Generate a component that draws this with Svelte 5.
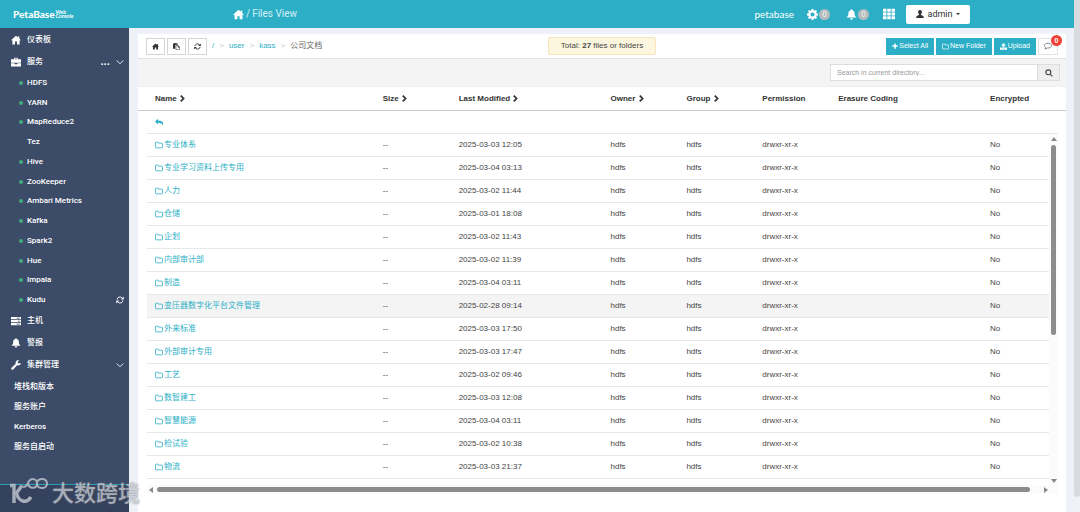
<script lang="ts">
  type Row = { name: string; modified: string };

  const services = [
    "HDFS",
    "YARN",
    "MapReduce2",
    "Tez",
    "Hive",
    "ZooKeeper",
    "Ambari Metrics",
    "Kafka",
    "Spark2",
    "Hue",
    "Impala",
    "Kudu",
  ];
  const admin = ["堆栈和版本", "服务账户", "Kerberos", "服务自启动"];

  const columns = [
    { label: "Name", width: 3, sortable: true },
    { label: "Size", width: 1, sortable: true },
    { label: "Last Modified", width: 2, sortable: true },
    { label: "Owner", width: 1, sortable: true },
    { label: "Group", width: 1, sortable: true },
    { label: "Permission", width: 1, sortable: false },
    { label: "Erasure Coding", width: 2, sortable: false },
    { label: "Encrypted", width: 1, sortable: false },
  ];

  const rows: Row[] = [
    { name: "专业体系", modified: "2025-03-03 12:05" },
    { name: "专业学习资料上传专用", modified: "2025-03-04 03:13" },
    { name: "人力", modified: "2025-03-02 11:44" },
    { name: "仓储", modified: "2025-03-01 18:08" },
    { name: "企划", modified: "2025-03-02 11:43" },
    { name: "内部审计部", modified: "2025-03-02 11:39" },
    { name: "制造", modified: "2025-03-04 03:11" },
    { name: "变压器数字化平台文件管理", modified: "2025-02-28 09:14" },
    { name: "外来标准", modified: "2025-03-03 17:50" },
    { name: "外部审计专用", modified: "2025-03-03 17:47" },
    { name: "工艺", modified: "2025-03-02 09:46" },
    { name: "数智建工", modified: "2025-03-03 12:08" },
    { name: "智慧能源", modified: "2025-03-04 03:11" },
    { name: "检试验", modified: "2025-03-02 10:38" },
    { name: "物流", modified: "2025-03-03 21:37" },
  ];

  let selected = $state(7);
  let query = $state("");
</script>

{#snippet icon(name: string, size: number)}
  <svg class="icon" width={size} height={size} viewBox="0 0 16 16" fill="currentColor" aria-hidden="true">
    {#if name === "home"}
      <path d="M8 1 0 8.4h2.2V15h4.2v-4.6h3.2V15h4.2V8.4H16l-2.6-2.5V2h-2v2.1z" />
    {:else if name === "case"}
      <path d="M5 3.5V1.8C5 1.2 5.4 1 6 1h4c.6 0 1 .3 1 .8v1.700h5v5.500H0v-5.500zm1.500 0h3v-1h-3zM0 10h6v1.500h4V10h6v5H0z" />
    {:else if name === "server"}
      <path d="M0 1.500h16v3.600H0zM0 6.300h16v3.600H0zM0 11.100h16v3.600H0z" />
      <path d="M9 2.800h5v1H9zM11 7.600h3v1h-3zM9 12.400h5v1H9z" fill="#3c4b67" />
    {:else if name === "bell"}
      <path d="M8 .5c.7 0 1.200.5 1.200 1.200C11.500 2.300 12.500 4 12.500 6.500c0 3 1 4.500 3 6H.5c2-1.500 3-3 3-6 0-2.500 1-4.200 3.300-4.800C6.800 1 7.300.5 8 .5zM6 13.300h4c0 1.300-.9 2.200-2 2.200s-2-.9-2-2.200z" />
    {:else if name === "wrench"}
      <path d="M15.600 4.200 12.900 5.700 10.800 4.600V2.300L13.400.8C11.200-.2 8.200.7 7.500 3.400c-.3 1-.1 1.900.1 2.700L.8 12.400c-1.800 1.900 1 4.600 2.800 2.800L9.800 8.400c3.300 1 6.200-1 5.800-4.200z" />
    {:else if name === "gear"}
      <path fill-rule="evenodd" d="M6.700 0h2.600l.4 2.200 1.200.5L12.800 1.400l1.800 1.800-1.300 1.900.5 1.200 2.200.4v2.600l-2.200.4-.5 1.200 1.300 1.900-1.800 1.800-1.900-1.300-1.200.5-.4 2.200H6.700l-.4-2.200-1.200-.5-1.900 1.300-1.800-1.800 1.300-1.900-.5-1.200L0 9.300V6.700l2.200-.4.5-1.200-1.300-1.900 1.800-1.800 1.900 1.300 1.200-.5zM8 5a3 3 0 1 0 0 6 3 3 0 0 0 0-6z" />
    {:else if name === "grid"}
      <path d="M0 1h4.600v4H0zM5.700 1h4.600v4H5.700zM11.400 1H16v4h-4.600zM0 6h4.600v4H0zM5.700 6h4.600v4H5.700zM11.400 6H16v4h-4.600zM0 11h4.600v4H0zM5.700 11h4.600v4H5.700zM11.400 11H16v4h-4.600z" />
    {:else if name === "user"}
      <path d="M8 0c2.400 0 3.800 1.600 3.800 4 0 1.800-.7 3.600-1.800 4.600v1.600c2 .9 5 1.500 5.500 3.800V16H.5v-2c.5-2.300 3.500-2.900 5.500-3.800V8.600C4.900 7.600 4.200 5.800 4.200 4 4.200 1.600 5.600 0 8 0z" />
    {:else if name === "paste"}
      <path d="M0 1h3V0h5v1h3v3H5v9H0z" />
      <path d="M6.700 5.700h5l3.600 3.600v6H6.700z" fill="#fff" stroke="currentColor" stroke-width="1.400" />
      <path d="M11 5v5h5z" />
    {:else if name === "refresh"}
      <path d="M13.500 6A6 6 0 0 0 3 4.500M2.500 10A6 6 0 0 0 13 11.500M2.200 7C2.400 5.500 3 4.500 4 3.600M13.800 9c-.2 1.500-.8 2.500-1.800 3.400" fill="none" stroke="currentColor" stroke-width="2" />
      <path d="M15.500 1v6h-6zM.5 15V9h6z" />
    {:else if name === "chevron"}
      <path d="M4 1.500 10.500 8 4 14.500" fill="none" stroke="currentColor" stroke-width="4" />
    {:else if name === "down"}
      <path d="M1.500 5 8 11.500 14.500 5" fill="none" stroke="currentColor" stroke-width="1.800" />
    {:else if name === "reply"}
      <path d="M6 1.500V5c6 0 10 1.500 10 6 0 1.500-.6 3-1.600 4C15 11 12 9.300 6 9.300V13L0 7.200z" />
    {:else if name === "folder"}
      <path d="M1 12.500v-9c0-.7.500-1.200 1.200-1.200h3.300c.7 0 1.200.5 1.200 1.200v.8h7c.7 0 1.300.6 1.300 1.300v6.900c0 .7-.6 1.200-1.300 1.200H2.200c-.7 0-1.200-.5-1.200-1.200z" fill="none" stroke="currentColor" stroke-width="1.600" />
    {:else if name === "plus"}
      <path d="M6 1h4v5h5v4h-5v5H6v-5H1V6h5z" />
    {:else if name === "upload"}
      <path d="M8 0l5.500 5.500H10V11H6V5.500H2.500zM0 10h5v2h6v-2h5v5.500H0z" />
    {:else if name === "comment"}
      <path d="M8 2.500c3.900 0 7 2 7 4.800S11.900 12 8 12c-.5 0-1 0-1.500-.1C5 13.300 3.500 14 2 14c.8-.9 1.200-1.800 1.300-3C1.800 10.100 1 8.800 1 7.300c0-2.800 3.100-4.800 7-4.800z" fill="none" stroke="currentColor" stroke-width="1.400" />
    {:else if name === "search"}
      <circle cx="6.700" cy="6.700" r="4.900" fill="none" stroke="currentColor" stroke-width="2.200" />
      <path d="M10 11.500l1.500-1.500 4 4-1.500 1.500z" />
    {/if}
  </svg>
{/snippet}

{#snippet cols()}
  <colgroup>
    {#each columns as c}
      <col style="width: {(c.width / 12) * 100}%" />
    {/each}
  </colgroup>
{/snippet}

<div class="page">
  <div class="app">
    <header class="topbar">
      <a class="brand" href="#home">
        <strong>PetaBase</strong>
        <span class="sub"><span>Web</span><span>Console</span></span>
      </a>
      <nav class="trail">
        <a href="#home" aria-label="Home">{@render icon("home", 11)}</a>
        <span>/</span>
        <span>Files View</span>
      </nav>
      <div class="tools">
        <span class="cluster">petabase</span>
        <button class="tool ops" aria-label="Operations">{@render icon("gear", 11)}<span class="count">0</span></button>
        <button class="tool alerts" aria-label="Alerts">{@render icon("bell", 11)}<span class="count">0</span></button>
        <button class="tool views" aria-label="Views">{@render icon("grid", 12)}</button>
        <button class="account">{@render icon("user", 8)}admin<span class="caret"></span></button>
      </div>
    </header>

    <div class="columns">
      <aside class="sidebar">
        <nav>
          <a class="item" href="#dashboard">{@render icon("home", 10)}<span>仪表板</span></a>
          <a class="item" href="#services">
            {@render icon("case", 10)}<span>服务</span>
            <span class="more">...</span>
            {@render icon("down", 8)}
          </a>
          <ul class="services">
            {#each services as name}
              <li>
                <i class="dot" class:off={name === "Tez"}></i>
                <a href="#{name}">{name}</a>
                {#if name === "Kudu"}<span class="restart">{@render icon("refresh", 8)}</span>{/if}
              </li>
            {/each}
          </ul>
          <a class="item" href="#hosts">{@render icon("server", 10)}<span>主机</span></a>
          <a class="item" href="#alerts">{@render icon("bell", 10)}<span>警报</span></a>
          <a class="item" href="#admin">
            {@render icon("wrench", 10)}<span class="grow">集群管理</span>
            {@render icon("down", 8)}
          </a>
          <ul class="admin">
            {#each admin as name}
              <li><a href="#{name}">{name}</a></li>
            {/each}
          </ul>
        </nav>
        <div class="foot"></div>
      </aside>

      <main class="panel">
        <div class="bar">
          <div class="left">
            <button class="sq" aria-label="Home folder">{@render icon("home", 7)}</button>
            <button class="sq" aria-label="Paste">{@render icon("paste", 7)}</button>
            <button class="sq" aria-label="Refresh">{@render icon("refresh", 7)}</button>
            <nav class="crumbs">
              <a href="#/">/</a><i>&gt;</i>
              <a href="#/user">user</a><i>&gt;</i>
              <a href="#/user/kass">kass</a><i>&gt;</i>
              <span>公司文档</span>
            </nav>
          </div>
          <div class="total">Total: <b>27</b> files or folders</div>
          <div class="actions">
            <button>{@render icon("plus", 6)}Select All</button>
            <button>{@render icon("folder", 7)}New Folder</button>
            <button>{@render icon("upload", 7)}Upload</button>
            <button class="log" aria-label="Messages">{@render icon("comment", 8)}<span class="badge">0</span></button>
          </div>
        </div>

        <form class="search" onsubmit={(e) => e.preventDefault()}>
          <input type="text" aria-label="Search" placeholder="Search in current directory..." bind:value={query} />
          <button aria-label="Search">{@render icon("search", 8)}</button>
        </form>

        <div class="head">
          <table>
            {@render cols()}
            <thead>
              <tr>
                {#each columns as c}
                  <th>{c.label}{#if c.sortable}&nbsp;{@render icon("chevron", 7)}{/if}</th>
                {/each}
              </tr>
            </thead>
          </table>
        </div>

        <div class="files">
          <div class="up"><a href="#up" aria-label="Parent folder">{@render icon("reply", 8)}</a></div>
          <div class="scroller">
            <table>
              {@render cols()}
              <tbody>
                {#each rows as row, i}
                  <tr class:selected={selected === i} onclick={() => (selected = i)}>
                    <td><a href="#{row.name}">{@render icon("folder", 8)}{row.name}</a></td>
                    <td>--</td>
                    <td>{row.modified}</td>
                    <td>hdfs</td>
                    <td>hdfs</td>
                    <td>drwxr-xr-x</td>
                    <td></td>
                    <td>No</td>
                  </tr>
                {/each}
              </tbody>
            </table>
            <div class="vbar"><i class="arrow n"></i><span></span><i class="arrow s"></i></div>
          </div>
          <div class="hbar"><i class="arrow w"></i><span></span><i class="arrow e"></i></div>
        </div>
      </main>
    </div>
  </div>
  <div class="pagebar"><span></span></div>

  <div class="watermark">
    <svg width="42" height="28" viewBox="0 0 42 28" fill="none" stroke="currentColor" aria-hidden="true">
      <path d="M1 8.500h4V26" stroke-width="3.400" />
      <path d="M13 8.500 7.500 16c2 9 10 11 14.500 4" stroke-width="3.400" />
      <path d="M14 9.500c2.500 1 4-1 5-3.500C21.500.5 28 1 28 6.500s-8 6-9 0M28 6.500c0-6 10-6 10 0s-10 6-10 0" stroke-width="2" />
    </svg>
    <span>大数跨境</span>
  </div>
</div>

<style>
  :global(body) {
    background: #eef1f7;
  }
  .page {
    position: relative;
    display: flex;
    min-height: 100vh;
    overflow: hidden;
    font-family: "Liberation Sans", "Noto Sans CJK SC", sans-serif;
    font-size: 8px;
    line-height: 12px;
    color: #444;
  }
  .app {
    flex: 1;
    min-width: 0;
    display: flex;
    flex-direction: column;
  }
  .icon {
    flex: none;
    vertical-align: middle;
  }
  a {
    color: inherit;
    text-decoration: none;
  }
  button {
    border: 0;
    padding: 0;
    background: none;
    color: inherit;
    font: inherit;
    cursor: pointer;
  }
  ul {
    list-style: none;
    margin: 0;
    padding: 0;
  }
  i {
    font-style: normal;
  }

  /* top bar */
  .topbar {
    display: flex;
    align-items: center;
    height: 28px;
    background: #2cafc6;
    color: #fff;
    font-family: Lato, sans-serif;
  }
  .brand {
    display: flex;
    align-items: center;
    gap: 1px;
    width: 220px;
    padding-left: 13px;
  }
  .brand strong {
    font-size: 10px;
    font-weight: 900;
  }
  .sub {
    display: flex;
    flex-direction: column;
    font-size: 5px;
    line-height: 4px;
    font-weight: 700;
  }
  .trail {
    flex: 1;
    display: flex;
    align-items: center;
    gap: 2px;
    font-family: Roboto, sans-serif;
    font-size: 10px;
    color: #d5f0f5;
  }
  .trail a {
    display: flex;
    color: #fff;
  }
  .tools {
    display: flex;
    align-items: center;
    margin-right: 104px;
  }
  .cluster {
    font-size: 10px;
    margin-right: 13px;
  }
  .tool {
    display: flex;
    align-items: center;
    gap: 1px;
  }
  .ops {
    margin-right: 16px;
  }
  .alerts {
    margin-right: 14px;
  }
  .views {
    margin-right: 11px;
  }
  .count {
    width: 11px;
    height: 11px;
    border-radius: 50%;
    background: #b5bcbe;
    font-size: 7px;
    line-height: 11px;
    text-align: center;
  }
  .account {
    display: flex;
    align-items: center;
    justify-content: center;
    gap: 3px;
    width: 64px;
    height: 19px;
    border-radius: 2px;
    background: #fff;
    color: #333;
    font-family: Roboto, sans-serif;
    font-size: 9px;
  }
  .caret {
    border: 2px solid transparent;
    border-top-color: #333;
    border-bottom: 0;
  }

  .columns {
    flex: 1;
    display: flex;
  }

  /* sidebar */
  .sidebar {
    flex: none;
    width: 129px;
    display: flex;
    flex-direction: column;
    justify-content: space-between;
    background: #3c4b67;
    color: #fff;
    font-family: Roboto, "Noto Sans CJK SC", sans-serif;
    font-weight: 500;
  }
  .sidebar nav {
    padding-top: 1px;
  }
  .item {
    display: flex;
    align-items: center;
    gap: 6px;
    height: 22px;
    padding: 0 5px 0 11px;
  }
  .more {
    margin-left: auto;
    font-size: 11px;
    font-weight: 700;
  }
  .grow {
    flex: 1;
  }
  .services {
    display: grid;
    grid-auto-rows: 1fr;
    height: 237px;
  }
  .services li {
    display: flex;
    align-items: center;
    gap: 4px;
    padding: 0 5px 0 19px;
  }
  .dot {
    width: 4px;
    height: 4px;
    border-radius: 50%;
    background: #3fae79;
  }
  .dot.off {
    background: none;
  }
  .restart {
    display: flex;
    margin-left: auto;
  }
  .admin {
    padding-top: 1px;
  }
  .admin li {
    height: 20px;
    padding-left: 14px;
    line-height: 20px;
  }
  .foot {
    height: 27px;
    border-top: 1px solid #2a9fb8;
    background: #35425e;
  }

  /* file panel */
  .panel {
    flex: 1;
    min-width: 0;
    margin: 6px 8px 0 9px;
    background: #fff;
  }
  .bar {
    display: grid;
    grid-template-columns: 1fr auto 1fr;
    align-items: center;
    height: 24px;
    padding: 0 8px;
    border-bottom: 1px solid #e2e2e2;
  }
  .left,
  .actions {
    display: flex;
    align-items: center;
    gap: 2px;
  }
  .sq {
    display: flex;
    align-items: center;
    justify-content: center;
    width: 19px;
    height: 17px;
    border: 1px solid #d5d5d5;
    color: #333;
  }
  .crumbs {
    display: flex;
    gap: 5px;
    margin-left: 3px;
    color: #666;
  }
  .crumbs a {
    color: #2cafc6;
  }
  .crumbs i {
    color: #ccc;
  }
  .total {
    padding: 2px 12px;
    border: 1px solid #f7e6bd;
    border-radius: 2px;
    background: #fcf6df;
  }
  .actions {
    justify-content: flex-end;
  }
  .actions button {
    display: flex;
    align-items: center;
    gap: 1px;
    height: 17px;
    padding: 0 6px;
    background: #2cafc6;
    color: #fff;
    font-size: 7px;
  }
  .actions .log {
    position: relative;
    width: 20px;
    padding: 0 5px;
    border: 1px solid #e2e2e2;
    background: #fff;
    color: #555;
  }
  .badge {
    position: absolute;
    top: -4px;
    right: -5px;
    width: 11px;
    height: 11px;
    border-radius: 50%;
    background: #ee4238;
    color: #fff;
    font-weight: 700;
    line-height: 11px;
    text-align: center;
  }
  .search {
    display: flex;
    justify-content: flex-end;
    height: 17px;
    padding: 5px 6px;
    background: #f4f4f4;
    border-bottom: 1px solid #eee;
  }
  .search input {
    box-sizing: border-box;
    width: 208px;
    padding: 0 6px;
    border: 1px solid #ddd;
    border-radius: 0;
    background: #fff;
    color: #444;
    font: inherit;
    font-size: 7px;
  }
  .search input::placeholder {
    color: #999;
  }
  .search button {
    display: flex;
    align-items: center;
    justify-content: center;
    width: 22px;
    border: 1px solid #ddd;
    border-left: 0;
    background: #eee;
  }
  .head {
    padding: 0 8px 0 9px;
    border-bottom: 1px solid #c8c8c8;
  }
  table {
    width: 100%;
    table-layout: fixed;
    border-collapse: separate;
    border-spacing: 0;
  }
  th,
  td {
    box-sizing: border-box;
    height: 23px;
    padding: 0 8px;
    text-align: left;
    white-space: nowrap;
  }
  th {
    color: #333;
  }
  td {
    border-bottom: 1px solid #e6e8ea;
  }
  .files {
    padding: 0 8px 0 9px;
  }
  .up {
    display: flex;
    align-items: center;
    height: 22px;
    padding-left: 8px;
    border-bottom: 1px solid #e6e8ea;
    color: #2cafc6;
  }
  .up a {
    display: flex;
  }
  .scroller {
    position: relative;
    padding-bottom: 6px;
  }
  td a {
    display: flex;
    align-items: center;
    gap: 1px;
    color: #2cafc6;
  }
  .selected td {
    background: #f4f4f4;
  }
  .vbar {
    position: absolute;
    inset: 0 0 0 auto;
    width: 9px;
    display: flex;
    flex-direction: column;
    align-items: center;
    gap: 4px;
    padding: 3px 0 2px;
    box-sizing: border-box;
    background: #fbfbfb;
  }
  .vbar span {
    width: 5px;
    height: 55%;
    border-radius: 3px;
    background: #8c8c8c;
  }
  .vbar .s {
    margin-top: auto;
  }
  .hbar {
    display: flex;
    align-items: center;
    gap: 4px;
    height: 9px;
    padding: 0 10px 0 2px;
    background: #fbfbfb;
  }
  .hbar span {
    flex: 1;
    height: 5px;
    margin-right: 10px;
    border-radius: 3px;
    background: #8c8c8c;
  }
  .arrow {
    border: 3px solid transparent;
  }
  .n {
    border-top: 0;
    border-bottom: 4px solid #888;
  }
  .s {
    border-bottom: 0;
    border-top: 4px solid #888;
  }
  .w {
    border-left: 0;
    border-right: 4px solid #888;
  }
  .e {
    border-right: 0;
    border-left: 4px solid #888;
  }

  /* outer scrollbar */
  .pagebar {
    flex: none;
    width: 6px;
    background: #f1f2f6;
  }
  .pagebar span {
    display: block;
    height: 97vh;
    border-radius: 0 0 3px 3px;
    background: #dadbdf;
  }

  .watermark {
    position: absolute;
    left: 9px;
    bottom: 7px;
    display: flex;
    align-items: center;
    gap: 1px;
    color: #c3c9d2;
    opacity: 0.8;
    font-family: "Noto Sans CJK SC", sans-serif;
    font-size: 22px;
    font-weight: 500;
    line-height: 26px;
    text-shadow: 0 0 2px #777;
  }
</style>
